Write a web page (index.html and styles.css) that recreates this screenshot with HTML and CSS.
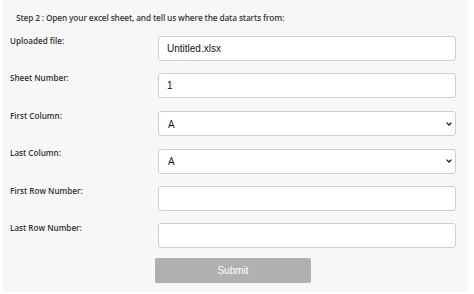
FILE: index.html
```html
<!DOCTYPE html>
<html>
<head>
<meta charset="utf-8">
<link rel="stylesheet" href="styles.css">
</head>
<body>
<div class="panel">
  <div class="heading">Step 2 : Open your excel sheet, and tell us where the data starts from:</div>
  <form class="form">
    <label class="label">Uploaded file:</label>
    <input class="field" type="text" value="Untitled.xlsx">
    <label class="label">Sheet Number:</label>
    <input class="field" type="text" value="1">
    <label class="label">First Column:</label>
    <div class="select-wrap">
      <select class="field select"><option>A</option></select>
      <svg class="chev" width="6" height="4" viewBox="0 0 6 4"><path d="M0.6 0.6 L3 3 L5.4 0.6" fill="none" stroke="#222" stroke-width="1.3"/></svg>
    </div>
    <label class="label">Last Column:</label>
    <div class="select-wrap">
      <select class="field select"><option>A</option></select>
      <svg class="chev" width="6" height="4" viewBox="0 0 6 4"><path d="M0.6 0.6 L3 3 L5.4 0.6" fill="none" stroke="#222" stroke-width="1.3"/></svg>
    </div>
    <label class="label">First Row Number:</label>
    <input class="field" type="text" value="">
    <label class="label">Last Row Number:</label>
    <input class="field" type="text" value="">
    <div></div>
    <button class="submit" type="button">Submit</button>
  </form>
</div>
</body>
</html>
```
FILE: styles.css
```css
html, body {
  margin: 0;
  padding: 0;
  background: #ffffff;
}
.panel {
  margin-left: 3px;
  width: 465px;
  height: 292px;
  box-sizing: border-box;
  background: #f7f7f7;
  padding: 12px 0 0 7px;
  font-family: "Open Sans", "Liberation Sans", sans-serif;
}
.heading {
  padding-left: 6px;
  font-size: 8.3px;
  font-weight: 600;
  color: #3a3a3a;
  line-height: 11px;
  letter-spacing: -0.15px;
}
.form {
  margin-top: 13px;
  display: grid;
  grid-template-columns: 148px 298px;
  grid-auto-rows: 25px;
  row-gap: 12.4px;
}
.label {
  font-size: 8.1px;
  font-weight: 600;
  color: #333;
  margin-top: -1px;
  line-height: 11px;
}
.field {
  width: 298px;
  height: 25px;
  box-sizing: border-box;
  margin: 0;
  border: 1px solid #cfcfcf;
  border-radius: 3px;
  background: #fff;
  padding: 0 0 0 8px;
  font-family: "Liberation Sans", Arial, sans-serif;
  font-size: 10px;
  color: #111;
  outline: none;
}
.select-wrap {
  position: relative;
}
.select {
  appearance: none;
  -webkit-appearance: none;
  padding-left: 9px;
  font-family: "Open Sans", "Liberation Sans", sans-serif;
  font-size: 10.5px;
  font-weight: 500;
}
.chev {
  position: absolute;
  right: 4px;
  top: 11px;
}
.submit {
  margin: -2.5px 0 0 -3px;
  width: 156px;
  height: 25px;
  border: none;
  border-radius: 2px;
  background: #b0b0b0;
  color: #fff;
  font-family: "Liberation Sans", Arial, sans-serif;
  font-size: 10px;
  padding: 0;
}
```
